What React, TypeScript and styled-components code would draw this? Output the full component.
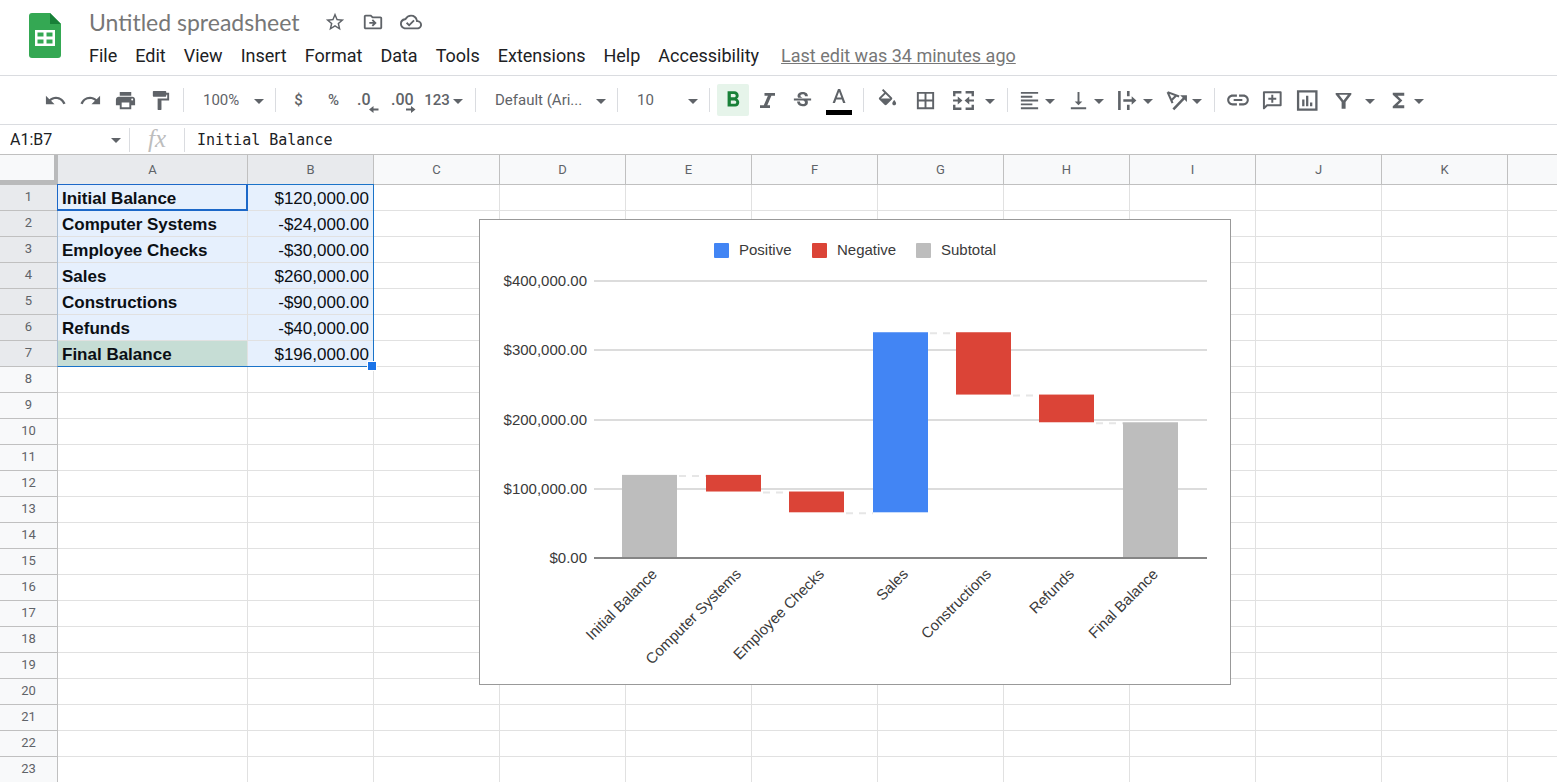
import React from "react";
import styled, { createGlobalStyle } from "styled-components";
import {
  MdUndo, MdRedo, MdPrint, MdFormatPaint, MdFormatBold, MdStrikethroughS,
  MdBorderAll, MdFormatAlignLeft, MdVerticalAlignBottom,
  MdLink, MdFunctions, MdStarBorder, MdOutlineDriveFileMove, MdOutlineCloudDone,
} from "react-icons/md";

const INK = "#5f6368";

const GlobalStyle = createGlobalStyle`
  * { box-sizing: border-box; }
  body { margin: 0; background: #fff; font-family: Roboto, "Liberation Sans", sans-serif; color: #202124; }
  button, input { font: inherit; color: inherit; margin: 0; padding: 0; border: 0; background: none; outline: 0; }
  button { cursor: pointer; }
`;

const Page = styled.div`
  display: flex;
  flex-direction: column;
  height: 100vh;
  overflow: hidden;
`;

const Header = styled.header`
  display: flex;
  flex: none;
  height: 76px;
  padding: 0 28px;
  gap: 27px;
  border-bottom: 1px solid #dadce0;
`;

const LogoLink = styled.a`
  display: block;
  padding-top: 13px;
  svg { display: block; }
`;

const HeaderText = styled.div`
  display: flex;
  flex-direction: column;
`;

const TitleRow = styled.div`
  display: flex;
  align-items: center;
  gap: 16px;
  height: 44px;
  color: ${INK};
`;

const TitleInput = styled.input`
  width: 219px;
  height: 32px;
  font-family: Lato, sans-serif;
  font-size: 23px;
  line-height: 32px;
  color: #777;
`;

const TitleButton = styled.button`
  display: flex;
  svg { width: 22px; height: 22px; }
`;

const Menu = styled.nav`
  display: flex;
  align-items: center;
  gap: 18px;
  height: 24px;
  font-size: 18px;
  line-height: 24px;
`;

const EditLink = styled.a`
  margin-left: 4px;
  color: #777;
  text-decoration: underline;
`;

const Toolbar = styled.div`
  display: flex;
  flex: none;
  align-items: center;
  height: 49px;
  padding-left: 38px;
  border-bottom: 1px solid #dadce0;
  color: ${INK};
  font-size: 15px;
  font-weight: 500;
`;

const Separator = styled.span`
  flex: none;
  width: 1px;
  height: 24px;
  margin: 0 5px;
  background: #dadce0;
`;

const Tool = styled.button<{ $width?: number; $icon?: number }>`
  display: flex;
  flex: none;
  align-items: center;
  justify-content: center;
  width: ${(p) => p.$width ?? 35}px;
  height: 32px;
  svg { display: block; flex: none; width: ${(p) => p.$icon ?? 23}px; height: ${(p) => p.$icon ?? 23}px; }
`;

const ActiveFace = styled.span`
  display: flex;
  align-items: center;
  justify-content: center;
  width: 32px;
  height: 32px;
  border-radius: 2px;
  background: #e6f4ea;
  color: #188038;
`;

const SplitTool = styled.button<{ $wide?: boolean }>`
  display: flex;
  flex: none;
  align-items: center;
  width: ${(p) => (p.$wide ? 57 : 49)}px;
  height: 32px;
`;

const SplitFace = styled.span<{ $wide?: boolean }>`
  display: flex;
  flex: none;
  justify-content: center;
  width: ${(p) => (p.$wide ? 40 : 32)}px;
  padding-right: ${(p) => (p.$wide ? 4 : 0)}px;
  svg { display: block; width: 23px; height: 23px; }
`;

const Picker = styled.button<{ $width: number }>`
  display: flex;
  flex: none;
  align-items: center;
  justify-content: space-between;
  width: ${(p) => p.$width}px;
  height: 32px;
  padding: 0 6px 0 14px;
  font-weight: 400;
`;

const CaretMark = styled.span`
  flex: none;
  border: 5px solid transparent;
  border-top-color: ${INK};
  border-bottom: 0;
  margin-top: 2px;
`;

const FormulaBar = styled.div`
  display: flex;
  flex: none;
  align-items: center;
  height: 30px;
  border-bottom: 1px solid #c0c0c0;
`;

const NameBox = styled.div`
  display: flex;
  align-items: center;
  width: 130px;
  padding: 0 8px 0 10px;
  border-right: 1px solid #dadce0;
  height: 24px;
`;

const NameInput = styled.input`
  flex: 1;
  min-width: 0;
  font-size: 16px;
`;

const FxLabel = styled.label`
  width: 55px;
  height: 24px;
  border-right: 1px solid #dadce0;
  font: italic 25px/22px "Liberation Serif", serif;
  color: #bdbdbd;
  text-align: center;
`;

const FormulaInput = styled.input`
  flex: 1;
  padding-left: 12px;
  font-family: "DejaVu Sans Mono", "Liberation Mono", monospace;
  font-size: 15px;
  line-height: 24px;
`;

const SheetArea = styled.main`
  position: relative;
  flex: 1;
  min-height: 0;
  overflow: hidden;
`;

const Grid = styled.table`
  width: 100%;
  table-layout: fixed;
  border-collapse: separate;
  border-spacing: 0;
  th:last-child:not(:first-child), td:last-child { border-right: 0; }
`;

const Corner = styled.td`
  height: 30px;
  padding: 0;
  background: #f8f9fa;
  border-right: 4px solid #b9babb;
  border-bottom: 5px solid #b9babb;
`;

const ColumnHead = styled.th<{ $on?: boolean }>`
  padding: 0;
  font-size: 13px;
  font-weight: 400;
  color: ${INK};
  background: ${(p) => (p.$on ? "#e8eaed" : "#f8f9fa")};
  border-right: 1px solid #c0c0c0;
  border-bottom: 1px solid #c0c0c0;
`;

const RowHead = styled.th<{ $on?: boolean }>`
  height: 26px;
  padding: 0 0 2px;
  font-size: 13px;
  line-height: 16px;
  font-weight: 400;
  color: ${INK};
  background: ${(p) => (p.$on ? "#e8eaed" : "#f8f9fa")};
  border-right: 1px solid #c0c0c0;
  border-bottom: 1px solid #c0c0c0;
`;

const Cell = styled.td<{ $fill?: string; $bold?: boolean; $right?: boolean }>`
  padding: 2px 4px 0;
  font-family: "Liberation Sans", Arial, sans-serif;
  font-size: 17px;
  line-height: 20px;
  white-space: nowrap;
  color: #0b0f14;
  font-weight: ${(p) => (p.$bold ? 700 : 400)};
  text-align: ${(p) => (p.$right ? "right" : "left")};
  background: ${(p) => p.$fill ?? "#fff"};
  border-right: 1px solid #e1e1e1;
  border-bottom: 1px solid #e1e1e1;
`;

const Selection = styled.div`
  position: absolute;
  left: 57px;
  top: 29px;
  width: 317px;
  height: 183px;
  border: 1px solid #1a73c8;
  border-left-color: #a9bdd2;
  pointer-events: none;
`;

const ActiveCell = styled.div`
  position: absolute;
  left: -1px;
  top: -1px;
  width: 191px;
  height: 27px;
  border: 2px solid #1c68c8;
  border-left-width: 1px;
  border-top-width: 1px;
`;

const FillHandle = styled.div`
  position: absolute;
  right: -4px;
  bottom: -5px;
  width: 10px;
  height: 10px;
  border: 1px solid #fff;
  background: #1a73e8;
`;

const ChartCard = styled.figure`
  position: absolute;
  left: 479px;
  top: 64px;
  margin: 0;
  border: 1px solid #999;
  background: #fff;
  svg { display: block; }
  text { font-family: "Liberation Sans", Arial, sans-serif; font-size: 15px; fill: #3a3a3a; }
`;

const Caret = () => <CaretMark aria-hidden="true" />;

const SheetsLogo = () => (
  <svg width="34" height="46" viewBox="0 0 34 46">
    <path d="M4 0H22L33 11V42a3 3 0 0 1-3 3H4a3 3 0 0 1-3-3V3a3 3 0 0 1 3-3z" fill="#34a853" />
    <path d="M22 0L33 11H22z" fill="#188038" />
    <path fillRule="evenodd" fill="#fff" d="M7 17h20v16H7zM9.500 19.500v4h6v-4zM18.500 19.500v4h6v-4zM9.500 26.500v4h6v-4zM18.500 26.500v4h6v-4z" />
  </svg>
);

const DecimalIcon = ({ label, more }: { label: string; more?: boolean }) => (
  <svg viewBox="0 0 26 26" fill="currentColor">
    <text x={more ? 0 : 1} y="18" fontSize="16" fontWeight="500">{label}</text>
    {more
      ? <path d="M15 21.500h5v-2.500l4.500 3.500-4.500 3.500v-2.500h-5z" />
      : <path d="M22.500 21.500h-5v-2.500L13 22.500l4.500 3.500v-2.500h5z" />}
  </svg>
);

const ItalicIcon = () => (
  <svg viewBox="0 0 23 23" fill="currentColor">
    <path d="M8.500 4H19v2.800h-3.600L11.300 16.200H14V19H4v-2.800h3.800L11.900 6.800H8.500z" />
  </svg>
);

const TextColorIcon = () => (
  <svg viewBox="0 0 30 30">
    <path d="M14 4h2.200l5.300 14h-2.400l-1.200-3.500h-5.700L11 18H8.600zm1.100 2.700l-2.200 5.900h4.400z" fill={INK} />
    <path d="M2 25h26v5H2z" fill="#000" />
  </svg>
);

const FillIcon = () => (
  <svg viewBox="0 0 24 24" fill="currentColor">
    <path d="M16.560 8.940L7.620 0 6.210 1.410l2.380 2.380-5.150 5.150c-.59.59-.59 1.540 0 2.120l5.500 5.500c.29.29.68.44 1.060.44s.77-.15 1.060-.44l5.500-5.500c.59-.58.59-1.530 0-2.120zM5.210 10L10 5.210 14.790 10H5.210zM19 11.500s-2 2.170-2 3.500c0 1.100.9 2 2 2s2-.9 2-2c0-1.330-2-3.500-2-3.500z" />
  </svg>
);

const MergeIcon = () => (
  <svg viewBox="0 0 22 22" fill="currentColor">
    <path d="M1 2h8v2.300H3.300V7H1zM13 2h8v5h-2.300V4.300H13zM1 15h2.300v2.700H9V20H1zM18.700 15H21v5h-8v-2.300h5.700z" />
    <path d="M1 10h4.500V7.200L10 11l-4.500 3.800V12H1zM21 10h-4.500V7.200L12 11l4.500 3.800V12H21z" />
  </svg>
);

const OverflowIcon = () => (
  <svg viewBox="0 0 22 22" fill="currentColor">
    <path d="M2 2h2.500v18H2zM10.500 2H13v5h-2.500zM10.500 15H13v5h-2.500z" />
    <path d="M7 9.900h8V7l4.500 4-4.500 4v-2.900H7z" />
  </svg>
);

const RotateIcon = () => (
  <svg viewBox="0 0 22 22" fill="none" stroke="currentColor" strokeWidth="2">
    <path d="M2.500 3L13.500 7.200M2.500 3L7.200 13.500M10.500 6.500L6.200 10.800" />
    <path d="M8 19.500L18.500 8.500" strokeWidth="2.400" />
    <path d="M14.500 6H21v6.500z" fill="currentColor" stroke="none" />
  </svg>
);

const CommentIcon = () => (
  <svg viewBox="0 0 22 22" fill="none" stroke="currentColor" strokeWidth="1.900">
    <path d="M2.800 18.500V3.200h16v12.300H5.800z" strokeLinejoin="round" />
    <path d="M10.800 5.500v7.600M7 9.300h7.600" />
  </svg>
);

const ChartIcon = () => (
  <svg viewBox="0 0 22 22" fill="none" stroke="currentColor" strokeWidth="2.200">
    <path d="M2 2.200h17.500v17.600H2zM7 10v6.500M10.700 6.500v10M14.500 13v3.500" />
  </svg>
);

const FilterIcon = () => (
  <svg viewBox="0 0 22 22" fill="currentColor">
    <path fillRule="evenodd" d="M3.500 3.800h15v1.500L13 12.500V18.800H9.200v-6.300L3.500 5.300zM6.800 5.600L11 10.900 15.200 5.600z" />
  </svg>
);

const menuItems = ["File", "Edit", "View", "Insert", "Format", "Data", "Tools", "Extensions", "Help", "Accessibility"];

const columns = ["A", "B", "C", "D", "E", "F", "G", "H", "I", "J", "K", ""];

const records: [string, string][] = [
  ["Initial Balance", "$120,000.00"],
  ["Computer Systems", "-$24,000.00"],
  ["Employee Checks", "-$30,000.00"],
  ["Sales", "$260,000.00"],
  ["Constructions", "-$90,000.00"],
  ["Refunds", "-$40,000.00"],
  ["Final Balance", "$196,000.00"],
];

const BLUE = "#4285f4";
const RED = "#db4437";
const GREY = "#bdbdbd";

// Running balance in thousands before and after each step.
const steps = [
  { name: "Initial Balance", from: 0, to: 120, color: GREY },
  { name: "Computer Systems", from: 120, to: 96, color: RED },
  { name: "Employee Checks", from: 96, to: 66, color: RED },
  { name: "Sales", from: 66, to: 326, color: BLUE },
  { name: "Constructions", from: 326, to: 236, color: RED },
  { name: "Refunds", from: 236, to: 196, color: RED },
  { name: "Final Balance", from: 0, to: 196, color: GREY },
];

const legend = [
  { name: "Positive", color: BLUE, x: 234 },
  { name: "Negative", color: RED, x: 332 },
  { name: "Subtotal", color: GREY, x: 436 },
];

const yOf = (value: number) => 338 - value * 0.6925;
const xOf = (index: number) => Math.round(142.400 + index * 83.4);

const WaterfallChart = () => (
  <svg width="750" height="464" viewBox="0 0 750 464" role="img" aria-label="Balance by step">
    {legend.map((item) => (
      <g key={item.name}>
        <rect x={item.x} y="23" width="15" height="15" rx="1" fill={item.color} />
        <text x={item.x + 25} y="35">{item.name}</text>
      </g>
    ))}
    {[400, 300, 200, 100, 0].map((tick) => (
      <g key={tick}>
        <text x="107" y={Math.round(yOf(tick)) + 5} textAnchor="end">{tick ? `$${tick},000.00` : "$0.00"}</text>
        {tick > 0 && <rect x="114" y={Math.round(yOf(tick)) - 1} width="613" height="2" fill="#dcdcdc" />}
      </g>
    ))}
    {steps.slice(0, -1).map((step, i) => (
      <path key={step.name} d={`M${xOf(i) + 57} ${yOf(step.to) + 1}H${xOf(i + 1)}`} stroke="#e6e6e6" strokeWidth="2" strokeDasharray="7 6" />
    ))}
    {steps.map((step, i) => (
      <g key={step.name}>
        <rect
          x={xOf(i)}
          y={yOf(Math.max(step.from, step.to))}
          width="55"
          height={Math.abs(yOf(step.from) - yOf(step.to))}
          fill={step.color}
        />
        <text transform={`translate(${xOf(i) + 36} 355) rotate(-45)`} textAnchor="end">{step.name}</text>
      </g>
    ))}
    <rect x="114" y="337" width="613" height="2" fill="#858585" />
  </svg>
);

const cellFill = (row: number, col: number) => {
  if (row > 6 || col > 1) return undefined;
  return row === 6 && col === 0 ? "#c6ddd5" : "#e6f0fd";
};

export default function App() {
  return (
    <Page>
      <GlobalStyle />
      <Header>
        <LogoLink href="#" aria-label="Sheets home"><SheetsLogo /></LogoLink>
        <HeaderText>
          <TitleRow>
            <TitleInput aria-label="Document title" defaultValue="Untitled spreadsheet" />
            <TitleButton aria-label="Star"><MdStarBorder /></TitleButton>
            <TitleButton aria-label="Move"><MdOutlineDriveFileMove /></TitleButton>
            <TitleButton aria-label="Document status"><MdOutlineCloudDone /></TitleButton>
          </TitleRow>
          <Menu>
            {menuItems.map((item) => <button key={item}>{item}</button>)}
            <EditLink href="#">Last edit was 34 minutes ago</EditLink>
          </Menu>
        </HeaderText>
      </Header>

      <Toolbar role="toolbar">
        <Tool aria-label="Undo"><MdUndo /></Tool>
        <Tool aria-label="Redo"><MdRedo /></Tool>
        <Tool aria-label="Print"><MdPrint /></Tool>
        <Tool aria-label="Paint format"><MdFormatPaint /></Tool>
        <Separator />
        <Picker $width={81}>100%<Caret /></Picker>
        <Separator />
        <Tool>$</Tool>
        <Tool>%</Tool>
        <Tool aria-label="Decrease decimal places" $icon={26}><DecimalIcon label=".0" /></Tool>
        <Tool aria-label="Increase decimal places" $icon={26}><DecimalIcon label=".00" more /></Tool>
        <SplitTool><SplitFace>123</SplitFace><Caret /></SplitTool>
        <Separator />
        <Picker $width={131}>Default (Ari...<Caret /></Picker>
        <Separator />
        <Picker $width={81}>10<Caret /></Picker>
        <Separator />
        <Tool aria-label="Bold" aria-pressed="true" $icon={26}><ActiveFace><MdFormatBold /></ActiveFace></Tool>
        <Tool aria-label="Italic"><ItalicIcon /></Tool>
        <Tool aria-label="Strikethrough"><MdStrikethroughS /></Tool>
        <Tool aria-label="Text color" $width={38} $icon={30}><TextColorIcon /></Tool>
        <Separator />
        <Tool aria-label="Fill color" $width={36}><FillIcon /></Tool>
        <Tool aria-label="Borders" $width={40}><MdBorderAll /></Tool>
        <SplitTool aria-label="Merge cells" $wide><SplitFace $wide><MergeIcon /></SplitFace><Caret /></SplitTool>
        <Separator />
        <SplitTool aria-label="Horizontal align"><SplitFace><MdFormatAlignLeft /></SplitFace><Caret /></SplitTool>
        <SplitTool aria-label="Vertical align"><SplitFace><MdVerticalAlignBottom /></SplitFace><Caret /></SplitTool>
        <SplitTool aria-label="Text wrapping"><SplitFace><OverflowIcon /></SplitFace><Caret /></SplitTool>
        <SplitTool aria-label="Text rotation"><SplitFace><RotateIcon /></SplitFace><Caret /></SplitTool>
        <Separator />
        <Tool aria-label="Insert link" $icon={26}><MdLink /></Tool>
        <Tool aria-label="Insert comment"><CommentIcon /></Tool>
        <Tool aria-label="Insert chart"><ChartIcon /></Tool>
        <SplitTool aria-label="Filter" $wide><SplitFace $wide><FilterIcon /></SplitFace><Caret /></SplitTool>
        <SplitTool aria-label="Functions"><SplitFace><MdFunctions /></SplitFace><Caret /></SplitTool>
      </Toolbar>

      <FormulaBar>
        <NameBox>
          <NameInput aria-label="Name box" defaultValue="A1:B7" />
          <Caret />
        </NameBox>
        <FxLabel htmlFor="formula">fx</FxLabel>
        <FormulaInput id="formula" defaultValue="Initial Balance" />
      </FormulaBar>

      <SheetArea>
        <Grid>
          <colgroup>
            <col width="58" />
            <col width="190" />
            {columns.slice(1, -1).map((name) => <col key={name} width="126" />)}
            <col />
          </colgroup>
          <thead>
            <tr>
              <Corner />
              {columns.map((name, i) => <ColumnHead key={i} scope="col" $on={i < 2}>{name}</ColumnHead>)}
            </tr>
          </thead>
          <tbody>
            {Array.from({ length: 23 }, (_, row) => (
              <tr key={row}>
                <RowHead scope="row" $on={row < 7}>{row + 1}</RowHead>
                {columns.map((_, col) => (
                  <Cell key={col} $fill={cellFill(row, col)} $bold={col === 0} $right={col === 1}>
                    {records[row]?.[col]}
                  </Cell>
                ))}
              </tr>
            ))}
          </tbody>
        </Grid>
        <Selection><ActiveCell /><FillHandle /></Selection>
        <ChartCard><WaterfallChart /></ChartCard>
      </SheetArea>
    </Page>
  );
}
